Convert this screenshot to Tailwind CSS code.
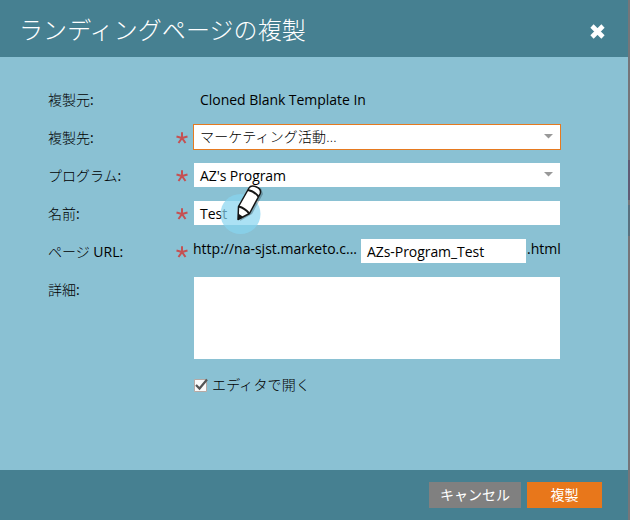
<!DOCTYPE html>
<html lang="ja">
<head>
<meta charset="utf-8">
<title>ランディングページの複製</title>
<script src="https://cdn.jsdelivr.net/npm/@tailwindcss/browser@4"></script>
</head>
<body class="w-[630px] h-[520px] overflow-hidden flex bg-[#767579] text-[14px] leading-[20px] text-black font-['Open_Sans','Noto_Sans_CJK_JP',sans-serif]">
<svg class="hidden"><symbol id="star" viewBox="0 0 12 12"><path d="M6 6V.3M6 6L.5 4.500M6 6l5.500-1.500M6 6l-3.500 5M6 6l3.500 5" stroke="#c55052" stroke-width="2" fill="none"/></symbol></svg>
<main class="relative w-[628px] h-[520px] flex flex-col bg-[#8ac1d3] shrink-0">
  <header class="h-[57px] bg-[#468091] flex items-center justify-between pl-[19px] pr-[23px] text-white">
    <h1 class="text-[24px] leading-[30px] font-light tracking-[0.08px] whitespace-nowrap pt-[2px]">ランディングページの複製</h1>
    <svg class="w-[15px] h-[15px] mt-[5px]" viewBox="0 0 15 15"><path d="M2 2l11 11M13 2L2 13" stroke="#fff" stroke-width="4.600"/></svg>
  </header>
  <section class="h-[413px] pt-6 pl-[48px]">
    <div class="flex items-center h-[38px]"><span class="w-[145px]"><span class="font-light">複製元</span>:</span><span class="pl-[7px] tracking-[-0.04px]">Cloned Blank Template In</span></div>
    <div class="flex items-center h-[38px]"><span class="w-[128px]"><span class="font-light">複製先</span>:</span><svg class="w-3 h-3 mr-[5px] -mt-[1px]"><use href="#star"/></svg>
      <div class="w-[368px] h-[26px] -mt-[2px] border border-[#e67a20] bg-white flex items-center justify-between pl-[6px] pr-[7px]"><span class="font-light tracking-[0.15px]">マーケティング活動...</span><svg class="w-[9px] h-[5px] -mt-[1px]" viewBox="0 0 9 5"><path d="M0 0h9L4.500 4.500z" fill="#999"/></svg></div></div>
    <div class="flex items-center h-[38px]"><span class="w-[128px]"><span class="font-light">プログラム</span>:</span><svg class="w-3 h-3 mr-[6px] -mt-[1px]"><use href="#star"/></svg>
      <div class="w-[366px] h-6 -mt-[2px] bg-white flex items-center justify-between pl-[6px] pr-[7px]"><span class="pt-[2px] tracking-[-0.08px]">AZ's Program</span><svg class="w-[9px] h-[5px] -mt-[1px]" viewBox="0 0 9 5"><path d="M0 0h9L4.500 4.500z" fill="#999"/></svg></div></div>
    <div class="flex items-center h-[38px]"><span class="w-[128px]"><span class="font-light">名前</span>:</span><svg class="w-3 h-3 mr-[6px] -mt-[1px]"><use href="#star"/></svg>
      <div class="w-[366px] h-6 -mt-[2px] bg-white flex items-center pl-[6px] pt-[2px]">Test</div></div>
    <div class="flex items-center h-[38px]"><span class="w-[128px]"><span class="font-light">ページ</span> URL:</span><svg class="w-3 h-3 mr-[5px] -mt-[1px]"><use href="#star"/></svg>
      <span class="w-[168px] -mt-[6px] whitespace-nowrap">http://na-sjst.marketo.c...</span><div class="w-[165px] h-6 -mt-[2px] bg-white flex items-center pl-[6px] pt-[2px] tracking-[-0.06px]">AZs-Program_Test</div><span class="-mt-[6px] pl-[1px]">.html</span></div>
    <div class="flex h-[89px]"><span class="w-[146px] pt-[9px]"><span class="font-light">詳細</span>:</span><div class="w-[366px] h-[82px] mt-[6px] bg-white"></div></div>
    <label class="flex items-center h-[50px] pl-[146px]"><svg class="w-[16px] h-[16px]" viewBox="0 0 16 16"><path d="M.5 2.500h12v12H.5z" fill="#fafafa" stroke="#b7aaa5"/><path d="M2 8l3.500 3.500L13 2.500" stroke="#555" stroke-width="2.200" fill="none"/></svg><span class="pl-[2px] font-light tracking-[0.15px]">エディタで開く</span></label>
  </section>
  <footer class="h-[50px] bg-[#468091] flex items-start pt-3 pl-[429px] gap-[6px] text-white">
    <button class="w-[92px] h-[26px] bg-[#808080] flex items-center justify-center">キャンセル</button>
    <button class="w-[75px] h-[26px] bg-[#e8771b] flex items-center justify-center">複製</button>
  </footer>
  <svg class="absolute left-[220px] top-[180px] w-[46px] h-[56px]" viewBox="0 0 46 56">
    <circle cx="20.500" cy="34" r="20" fill="#87d4f0" fill-opacity=".7"/>
    <path d="M20 41l12-7L43 14l-2-6-18 20z" fill="#263c45" opacity=".35"/>
    <path d="M18 39.500l.5-13L29 8Q31 4.500 36.500 7T40 14L29.500 33.500z" fill="#fff" stroke="#151515" stroke-width="1.500" stroke-linejoin="round"/>
    <path d="M28 10q6 1 10.500 6.500M18.800 26.500q6 1.500 10.500 7" stroke="#151515" stroke-width="2" fill="none"/>
    <path d="M18.200 33.500l4.500 3-4.700 3.500z" fill="#151515"/>
  </svg>
</main>
<aside class="w-[2px] h-[520px] bg-[#767579] pt-[160px]"><div class="h-[40px] bg-[#605c75]"></div><div class="h-[5px]"></div><div class="h-[31px] bg-[#59717f]"></div></aside>
</body>
</html>
